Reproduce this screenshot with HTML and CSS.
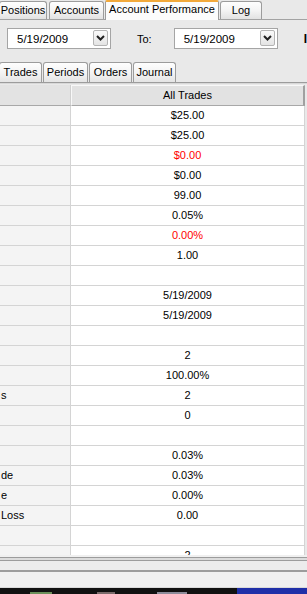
FILE: index.html
```html
<!DOCTYPE html>
<html>
<head>
<meta charset="utf-8">
<link rel="stylesheet" href="styles.css">
</head>
<body>
<div class="tabs">
  <div class="tab w-pos">Positions</div>
  <div class="tab w-acc">Accounts</div>
  <div class="tab active w-perf">Account Performance</div>
  <div class="tab w-log">Log</div>
</div>
<div class="panel">
  <div class="filters">
    <div class="combo"><span class="val">5/19/2009</span><span class="btn"><svg width="9" height="6" viewBox="0 0 9 6"><path d="M1 1 L4.5 4.5 L8 1" fill="none" stroke="#222" stroke-width="2"/></svg></span></div>
    <span class="to">To:</span>
    <div class="combo"><span class="val">5/19/2009</span><span class="btn"><svg width="9" height="6" viewBox="0 0 9 6"><path d="M1 1 L4.5 4.5 L8 1" fill="none" stroke="#222" stroke-width="2"/></svg></span></div>
    <span class="cut">I</span>
  </div>
  <div class="subtabs">
    <div class="stab s-tr">Trades</div>
    <div class="stab s-pe">Periods</div>
    <div class="stab s-or">Orders</div>
    <div class="stab s-jo">Journal</div>
  </div>
</div>
<div class="gridwrap">
  <div class="grid">
    <div class="hl"></div><div class="hv">All Trades</div>
    <div class="l"></div><div class="v">$25.00</div>
    <div class="l"></div><div class="v">$25.00</div>
    <div class="l"></div><div class="v red">$0.00</div>
    <div class="l"></div><div class="v">$0.00</div>
    <div class="l"></div><div class="v">99.00</div>
    <div class="l"></div><div class="v">0.05%</div>
    <div class="l"></div><div class="v red">0.00%</div>
    <div class="l"></div><div class="v">1.00</div>
    <div class="l"></div><div class="v"></div>
    <div class="l"></div><div class="v">5/19/2009</div>
    <div class="l"></div><div class="v">5/19/2009</div>
    <div class="l"></div><div class="v"></div>
    <div class="l"></div><div class="v">2</div>
    <div class="l"></div><div class="v">100.00%</div>
    <div class="l">s</div><div class="v">2</div>
    <div class="l"></div><div class="v">0</div>
    <div class="l"></div><div class="v"></div>
    <div class="l"></div><div class="v">0.03%</div>
    <div class="l">de</div><div class="v">0.03%</div>
    <div class="l">e</div><div class="v">0.00%</div>
    <div class="l">Loss</div><div class="v">0.00</div>
    <div class="l"></div><div class="v"></div>
    <div class="l"></div><div class="v">2</div>
  </div>
</div>
<div class="footer">
  <div class="f1"></div>
  <div class="f2"></div>
  <div class="f3"></div>
  <div class="f4"></div>
  <div class="taskbar"><span class="tb a"></span><span class="tb b"></span><span class="tb c"></span><span class="tb blue"></span></div>
</div>
</body>
</html>
```

FILE: styles.css
```css
* { box-sizing: border-box; margin: 0; padding: 0; }
html, body { width: 307px; height: 594px; overflow: hidden; }
body {
  background: #e9e9e9;
  font-family: "Liberation Sans", Arial, sans-serif;
  font-size: 11px;
  color: #000;
}

/* top tabs */
.tabs {
  display: flex;
  align-items: flex-end;
  height: 20px;
  border-bottom: 1px solid #a3a3a3;
  gap: 1px;
}
.tab {
  flex-shrink: 0;
  height: 18px;
  border: 1px solid #9c9c9c;
  border-bottom: none;
  border-radius: 3px 3px 0 0;
  background: linear-gradient(#fefefe, #f4f4f4 50%, #e2e2e2);
  text-align: center;
  line-height: 17px;
  white-space: nowrap;
}
.tab.active {
  height: 20px;
  margin-bottom: -1px;
  border-top: 2px solid #f2a93b;
  background: #fcfcfc;
  line-height: 15px;
  border-radius: 2px 2px 0 0;
}
.w-pos { width: 48px; margin-left: -1px; }
.w-acc { width: 55px; margin-left: 1px; }
.w-perf { width: 114px; }
.w-log { width: 42px; }

/* filter panel */
.panel { height: 63px; }
.filters {
  display: flex;
  align-items: center;
  padding: 7px 0 0 7px;
  height: 29px;
  white-space: nowrap;
  overflow: hidden;
}
.filters > * { flex-shrink: 0; }
.combo {
  display: flex;
  align-items: center;
  justify-content: space-between;
  width: 104px;
  height: 21px;
  border: 1px solid #a5a5a5;
  background: #fff;
  padding: 0 2px 0 9px;
}
.combo .val { line-height: 19px; padding-top: 2px; font-size: 11.5px; }
.btn {
  width: 15px;
  height: 16px;
  border: 1px solid #b4b4b4;
  border-radius: 2px;
  background: linear-gradient(#fafafa, #e4e4e4);
  display: flex;
  align-items: center;
  justify-content: center;
}
.to { margin: 2px 22px 0 26px; }
.cut { margin-left: 26px; font-weight: bold; font-size: 12px; padding-top: 2px; }

.subtabs {
  display: flex;
  align-items: flex-end;
  height: 34px;
  padding-top: 13px;
  border-bottom: 1px solid #9c9c9c;
  gap: 1px;
}
.stab {
  flex-shrink: 0;
  height: 20px;
  border: 1px solid #9c9c9c;
  border-bottom: none;
  border-radius: 3px 3px 0 0;
  background: linear-gradient(#fefefe, #f4f4f4 50%, #e4e4e4);
  text-align: center;
  line-height: 19px;
}
.s-tr { width: 43px; margin-left: -1px; }
.s-pe { width: 45px; }
.s-or { width: 43px; }
.s-jo { width: 43px; }

/* grid */
.gridwrap {
  height: 472px;
  overflow: hidden;
  border-top: 1px solid #d8d8d8;
  padding-top: 1px;
}
.grid {
  display: grid;
  grid-template-columns: 71px 234px;
  grid-auto-rows: 20px;
  grid-template-rows: 21px;
  width: 305px;
}
.hl {
  background: #e3e3e3;
  border-right: 1px solid #d0d0d0;
  border-bottom: 1px solid #a8a8a8;
}
.hv {
  background: #e2e2e2;
  border-top: 1px solid #f8f8f8;
  border-left: 1px solid #f8f8f8;
  border-right: 2px solid #a0a0a0;
  border-bottom: 1px solid #a8a8a8;
  text-align: center;
  line-height: 19px;
}
.l {
  background: #f4f4f4;
  border-right: 1px solid #d4d4d4;
  border-bottom: 1px solid #d4d4d4;
  line-height: 19px;
  padding-left: 1px;
  overflow: hidden;
  white-space: nowrap;
}
.v {
  background: #fff;
  border-right: 1px solid #d4d4d4;
  border-bottom: 1px solid #d4d4d4;
  text-align: center;
  line-height: 19px;
}
.red { color: #ff0000; }

/* footer */
.footer { height: 39px; display: flex; flex-direction: column; }
.f1 { height: 2px; background: #f0f0f0; }
.f2 { height: 4px; border-top: 1px solid #9c9c9c; border-bottom: 1px solid #9c9c9c; background: #dcdcdc; }
.f3 { height: 11px; background: #ececec; border-bottom: 2px solid #9c9c9c; }
.f4 { height: 16px; background: #f0f0f0; border-bottom: 1px solid #dadada; }
.taskbar {
  flex: 1;
  background: #111;
  display: flex;
  align-items: flex-start;
}
.tb { height: 2px; margin-top: 4px; }
.tb.a { width: 22px; margin-left: 30px; background: #6b8f5a; }
.tb.b { width: 18px; margin-left: 45px; background: #7a6b6b; }
.tb.c { width: 30px; margin-left: 42px; background: #8c8c9a; }
.tb.blue { flex: 1; margin-left: 50px; height: 6px; margin-top: 0; background: #1f2fa8; }
```
